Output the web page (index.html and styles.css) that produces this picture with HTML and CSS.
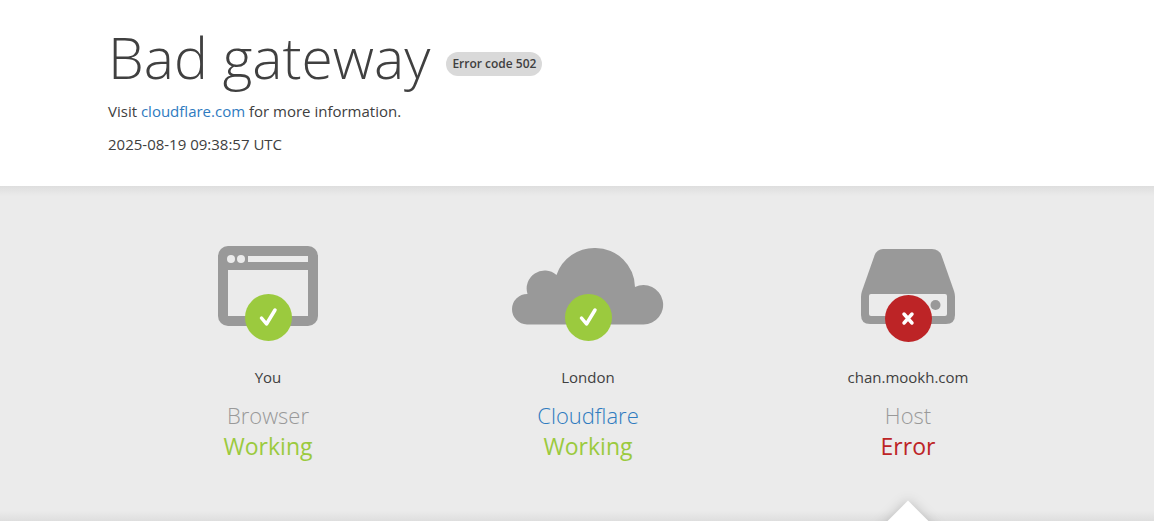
FILE: index.html
```html
<!DOCTYPE html>
<html lang="en">
<head>
    <meta charset="UTF-8">
    <meta name="viewport" content="width=device-width, initial-scale=1.0">
    <title>502: Bad gateway</title>
    <link rel="stylesheet" href="styles.css">
</head>
<body>
    <header class="error-header">
        <h1 class="error-title">
            <span>Bad gateway</span>
            <span class="error-code">Error code 502</span>
        </h1>
        <p class="error-text">Visit <a href="https://www.cloudflare.com/">cloudflare.com</a> for more information.</p>
        <p class="error-text">2025-08-19 09:38:57 UTC</p>
    </header>

    <main class="status-list">
        <section class="status-item">
            <svg class="status-icon" viewBox="0 0 152 96" aria-hidden="true">
                <rect class="shape" x="26" y="0" width="100" height="80" rx="10" />
                <circle class="hole" cx="39" cy="13" r="4" />
                <circle class="hole" cx="49" cy="13" r="4" />
                <rect class="hole" x="56" y="10" width="60" height="6" />
                <rect class="hole" x="36" y="24" width="80" height="46" />
                <circle class="badge-ok" cx="76.5" cy="71.5" r="23.5" />
                <path class="mark" d="M69.5 72l5 6 8.5-14" />
            </svg>
            <span class="status-place">You</span>
            <h2 class="status-name">Browser</h2>
            <span class="status-value ok">Working</span>
        </section>

        <section class="status-item">
            <svg class="status-icon" viewBox="0 0 152 96" aria-hidden="true">
                <path class="shape" d="M15 78.5A15.2 15.2 0 0 1 15.5 48A18 18 0 0 1 44.5 29A40 40 0 0 1 83.5 2A39.5 39.5 0 0 1 123 41A19.7 19.7 0 1 1 131.5 78.5Z" />
                <circle class="badge-ok" cx="76.5" cy="71.5" r="23.5" />
                <path class="mark" d="M69.5 72l5 6 8.5-14" />
            </svg>
            <span class="status-place">London</span>
            <h2 class="status-name"><a href="https://www.cloudflare.com/">Cloudflare</a></h2>
            <span class="status-value ok">Working</span>
        </section>

        <section class="status-item error-source">
            <svg class="status-icon" viewBox="0 0 152 96" aria-hidden="true">
                <path class="shape" d="M51 3H100Q107 3 109.5 9.5L122 45Q123 48 123 51V69Q123 78 114 78H38Q29 78 29 69V51Q29 48 30 45L42.5 9.5Q45 3 51 3Z" />
                <rect class="hole" x="37" y="48" width="78" height="22" rx="2" />
                <circle class="shape" cx="103.5" cy="59" r="5" />
                <circle class="badge-error" cx="76.5" cy="72.5" r="23.5" />
                <path class="mark" d="M72 68l8 9M80 68l-8 9" />
            </svg>
            <span class="status-place">chan.mookh.com</span>
            <h2 class="status-name">Host</h2>
            <span class="status-value error">Error</span>
        </section>
    </main>
</body>
</html>
```
FILE: styles.css
```css
* {
    box-sizing: border-box;
}

body {
    margin: 0;
    font-family: "Open Sans", "Noto Sans", sans-serif;
    font-size: 15px;
    line-height: 24px;
    color: #404040;
    background: #fff;
}

a {
    color: #2f7bbf;
    text-decoration: none;
}

.error-header {
    padding: 27px 86px 30px 108px;
}

.error-title {
    display: flex;
    flex-wrap: wrap;
    align-items: center;
    gap: 16px;
    margin: 0 0 12px;
    font-size: 57px;
    font-weight: 300;
    line-height: 60px;
}

.error-code {
    margin-top: 14px;
    padding: 0 6px;
    border-radius: 12px;
    background: #d9d9d9;
    font-size: 12px;
    font-weight: 600;
    line-height: 24px;
}

.error-text {
    margin: 0 0 9px;
}

.error-text:last-child {
    margin-bottom: 0;
}

.status-list {
    display: grid;
    grid-template-columns: repeat(3, 1fr);
    padding: 0 86px 0 108px;
    background: linear-gradient(#dedede, #ebebeb 3%, #ebebeb 97%, #dedede);
    overflow: hidden;
}

.status-item {
    position: relative;
    display: flex;
    flex-direction: column;
    align-items: center;
    padding: 60px 0 59px;
    text-align: center;
}

.status-icon {
    width: 152px;
    height: 96px;
    margin-bottom: 23px;
}

.status-place {
    margin-bottom: 11px;
}

.status-name {
    margin: 0;
    font-size: 22px;
    font-weight: 300;
    line-height: 31px;
    color: #999;
}

.status-value {
    font-size: 23px;
    line-height: 31px;
}

.ok {
    color: #9bca3e;
}

.error {
    color: #bd2426;
}

/* pointer rising from the bottom edge under the failing part */
.error-source::after {
    content: "";
    position: absolute;
    left: 50%;
    top: 100%;
    width: 60px;
    height: 60px;
    background: #fff;
    box-shadow: 0 0 12px #bbb;
    transform: translate(-50%, -8px) rotate(45deg);
}

.shape {
    fill: #999;
}

.hole {
    fill: #ebebeb;
}

.badge-ok {
    fill: #9bca3e;
}

.badge-error {
    fill: #bd2426;
}

.mark {
    fill: none;
    stroke: #fff;
    stroke-width: 3.5;
    stroke-linecap: round;
    stroke-linejoin: round;
}
```
